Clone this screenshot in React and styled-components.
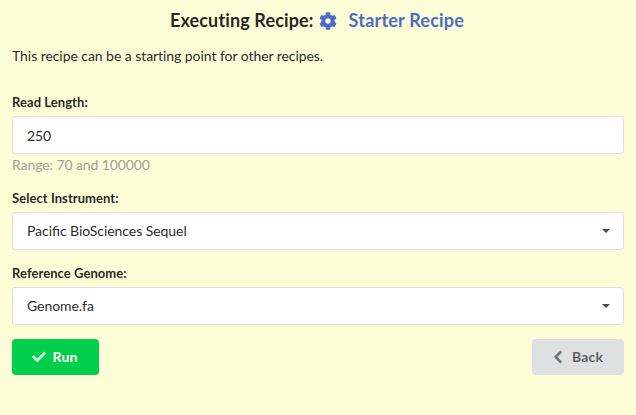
import React from "react";
import styled, { createGlobalStyle } from "styled-components";
import { FaCog, FaCheck, FaChevronLeft } from "react-icons/fa";

const Global = createGlobalStyle`
  *, *::before, *::after { box-sizing: border-box; }
  body {
    margin: 0;
    background: #fdfdd8;
    font-family: Lato, "Liberation Sans", sans-serif;
    font-size: 14px;
    line-height: 20px;
    color: rgba(0, 0, 0, 0.87);
  }
`;

const Form = styled.form`
  display: flex;
  flex-direction: column;
  min-height: 415px;
  padding: 9px 12px 0;
`;

const Title = styled.h3`
  display: flex;
  justify-content: center;
  align-items: center;
  margin: 0;
  font-size: 18px;
  line-height: 23px;
  font-weight: 700;
  letter-spacing: 0.13px;
  padding-right: 2px;
`;

const TitleIcon = styled(FaCog)`
  width: 18px;
  height: 18px;
  margin: 0 12px 0 5px;
  color: #4b6bc6;
`;

const RecipeLink = styled.span`
  color: #4b6bc6;
  letter-spacing: 0.2px;
`;

const Description = styled.p`
  margin: 14px 0 0;
  letter-spacing: -0.06px;
`;

const Field = styled.div`
  margin-top: ${(p) => p.$gap}px;
`;

const Label = styled.label`
  display: block;
  margin-bottom: 4px;
  font-size: 13px;
  line-height: 20px;
  font-weight: 700;
  letter-spacing: 0.06px;
`;

const Control = styled.div`
  display: flex;
  align-items: center;
  justify-content: space-between;
  height: 38px;
  padding: ${(p) => (p.$input ? "2px" : "0")} 13px 0 14px;
  background: #fff;
  border: 1px solid rgba(34, 36, 38, 0.15);
  border-radius: 4px;
  letter-spacing: -0.06px;
  font-feature-settings: "liga" 1;
`;

const Caret = styled.span`
  border: 4px solid transparent;
  border-top-color: rgba(0, 0, 0, 0.7);
  border-bottom: 0;
`;

const Hint = styled.div`
  margin-top: 1px;
  color: #a0a0a0;
  letter-spacing: -0.1px;
`;

const Actions = styled.div`
  display: flex;
  justify-content: space-between;
  margin-top: 14px;
`;

const Button = styled.button`
  display: flex;
  align-items: center;
  justify-content: center;
  gap: 7px;
  width: ${(p) => p.$width}px;
  height: 36px;
  padding: 0 2px 0 0;
  border: 0;
  border-radius: 4px;
  background: ${(p) => (p.$primary ? "#00cf4b" : "#dfe0e1")};
  color: ${(p) => (p.$primary ? "#fff" : "rgba(0, 0, 0, 0.6)")};
  font: 700 14px/14px Lato, "Liberation Sans", sans-serif;
  letter-spacing: 0.15px;

  svg { opacity: 0.8; width: 14px; height: 14px; }
`;

const BackIcon = styled(FaChevronLeft)`
  stroke: currentColor;
  stroke-width: 16px;
`;

export default function App() {
  return (
    <>
      <Global />
      <Form>
        <Title>
          Executing Recipe: <TitleIcon /> <RecipeLink>Starter Recipe</RecipeLink>
        </Title>
        <Description>This recipe can be a starting point for other recipes.</Description>
        <Field $gap={26}>
          <Label>Read Length:</Label>
          <Control $input>250</Control>
          <Hint>Range: 70 and 100000</Hint>
        </Field>
        <Field $gap={13}>
          <Label>Select Instrument:</Label>
          <Control>Pacific BioSciences Sequel<Caret /></Control>
        </Field>
        <Field $gap={13}>
          <Label>Reference Genome:</Label>
          <Control>Genome.fa<Caret /></Control>
        </Field>
        <Actions>
          <Button type="button" $primary $width={87}><FaCheck />Run</Button>
          <Button type="button" $width={92}><BackIcon />Back</Button>
        </Actions>
      </Form>
    </>
  );
}
